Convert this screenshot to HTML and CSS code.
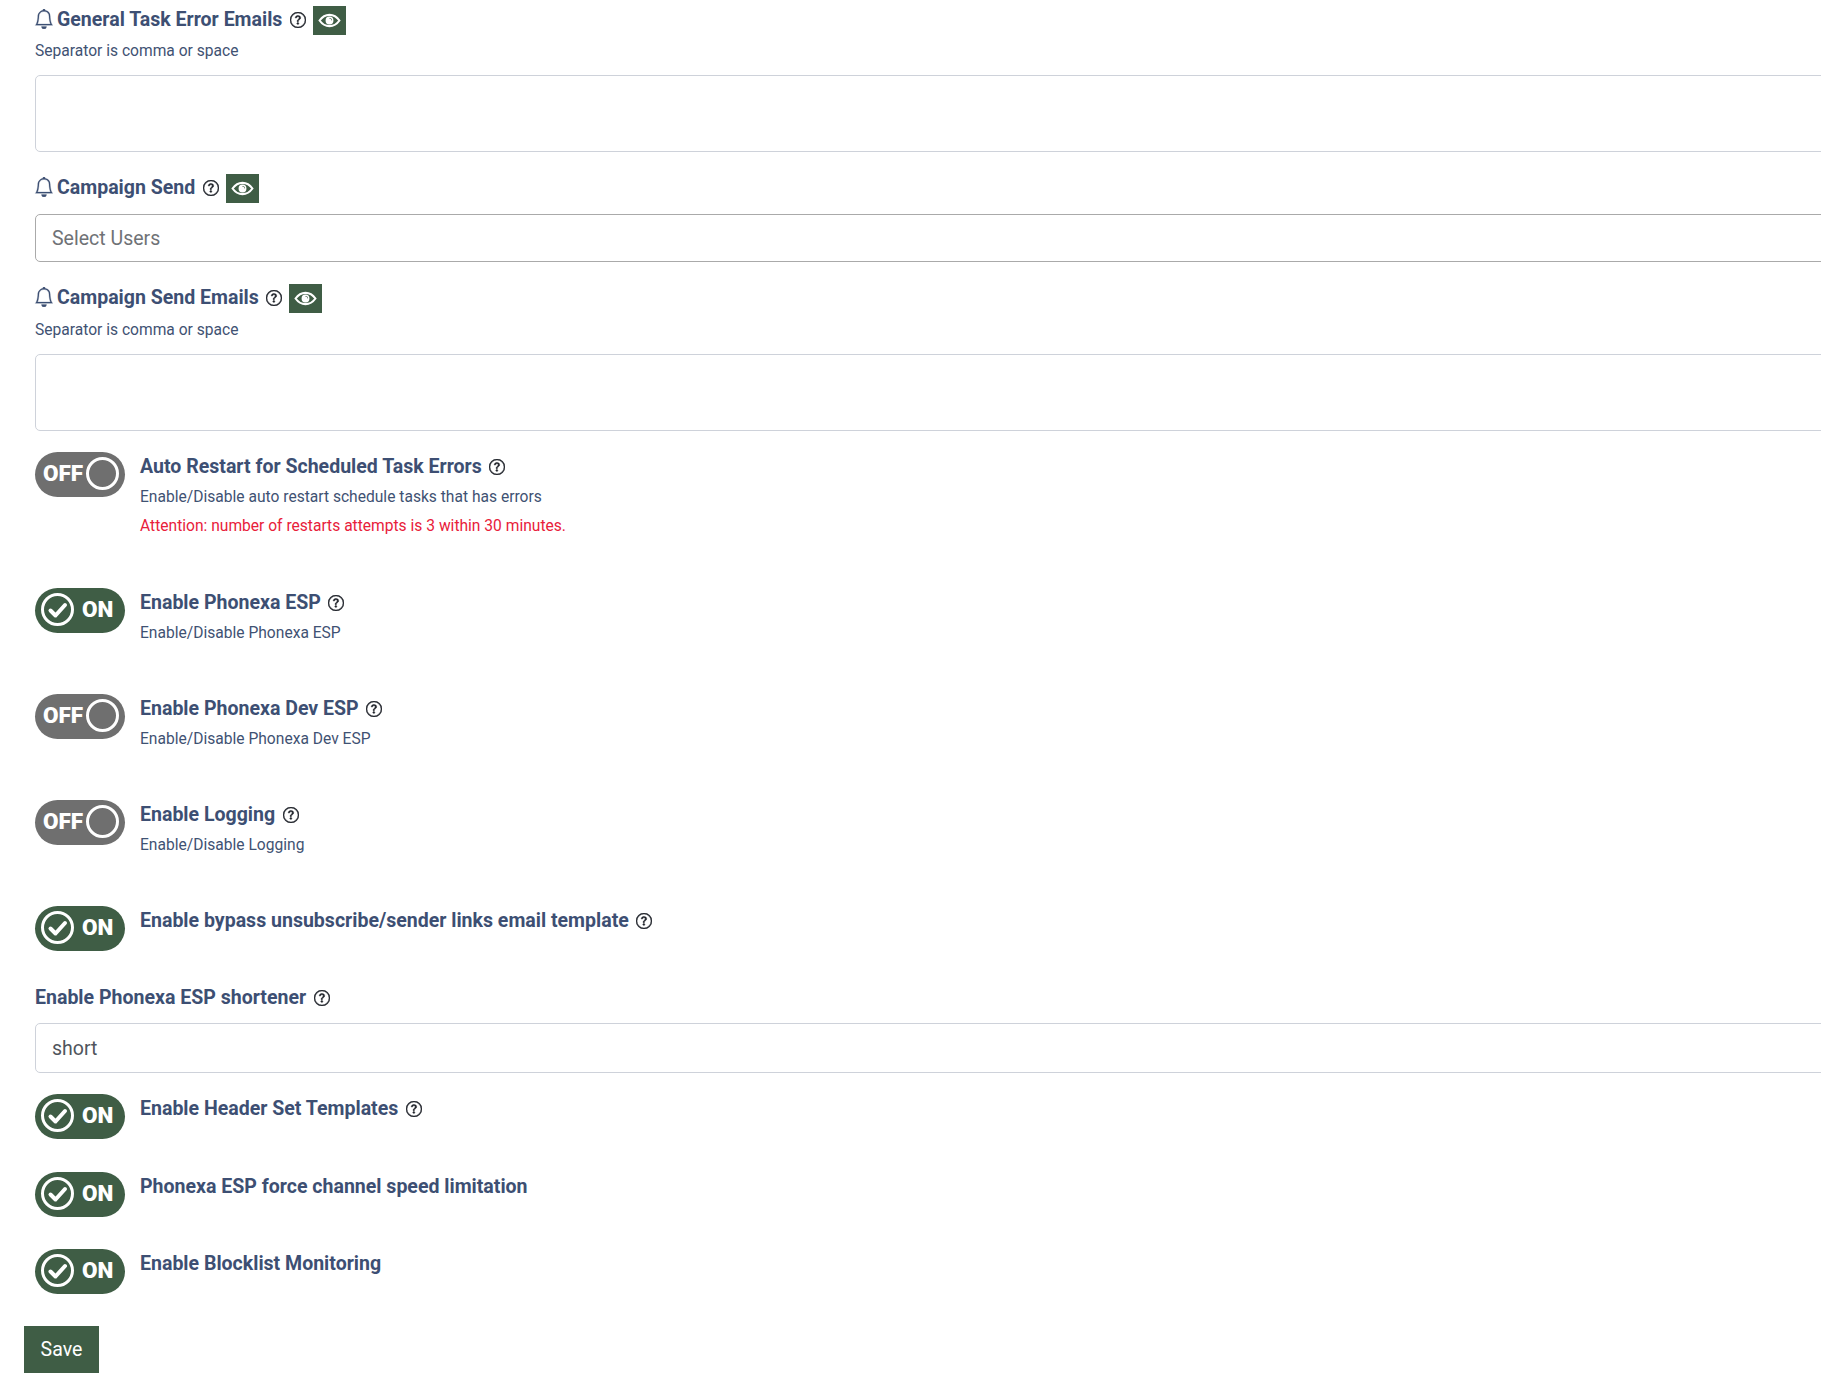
FILE: index.html
```html
<!DOCTYPE html>
<html lang="en">
<head>
<meta charset="utf-8">
<title>Settings</title>
<link rel="stylesheet" href="styles.css">
</head>
<body>
<svg class="sprite" width="0" height="0" aria-hidden="true">
  <symbol id="i-bell" viewBox="0 0 16 16"><path d="M8 16a2 2 0 0 0 2-2H6a2 2 0 0 0 2 2zM8 1.918l-.797.161A4.002 4.002 0 0 0 4 6c0 .628-.134 2.197-.459 3.742-.16.767-.376 1.566-.663 2.258h10.244c-.287-.692-.502-1.49-.663-2.258C12.134 8.197 12 6.628 12 6a4.002 4.002 0 0 0-3.203-3.92L8 1.917zM14.22 12c.223.447.481.801.78 1H1c.299-.199.557-.553.78-1C2.68 10.2 3 6.88 3 6c0-2.42 1.72-4.44 4.005-4.901a1 1 0 1 1 1.99 0A5.002 5.002 0 0 1 13 6c0 .88.32 4.2 1.22 6z"/></symbol>
  <symbol id="i-help" viewBox="0 0 16 16"><path d="M8 15A7 7 0 1 1 8 1a7 7 0 0 1 0 14zm0 1A8 8 0 1 0 8 0a8 8 0 0 0 0 16z"/><path d="M5.255 5.786a.237.237 0 0 0 .241.247h.825c.138 0 .248-.113.266-.25.09-.656.54-1.134 1.342-1.134.686 0 1.314.343 1.314 1.168 0 .635-.374.927-.965 1.371-.673.489-1.206 1.06-1.168 1.987l.003.217a.25.25 0 0 0 .25.246h.811a.25.25 0 0 0 .25-.25v-.105c0-.718.273-.927 1.01-1.486.609-.463 1.244-.977 1.244-2.056 0-1.511-1.276-2.241-2.673-2.241-1.267 0-2.655.59-2.75 2.286zm1.557 5.763c0 .533.425.927 1.01.927.609 0 1.028-.394 1.028-.927 0-.552-.42-.94-1.029-.94-.584 0-1.009.388-1.009.94z"/></symbol>
  <symbol id="i-eye" viewBox="0 0 24 16"><path fill="none" stroke="currentColor" stroke-width="2.200" d="M1.400 8C4.200 4 7.800 2 12 2s7.800 2 10.600 6c-2.800 4-6.400 6-10.600 6S4.200 12 1.400 8z"/><path fill="currentColor" fill-rule="evenodd" d="M12 3.800a4.200 4.200 0 1 0 0 8.400 4.200 4.200 0 0 0 0-8.400zm-.6 1.700a2.200 2.200 0 0 1 2.900 2.900 3.200 3.200 0 0 0-2.900-2.900z"/></symbol>
  <symbol id="i-check" viewBox="0 0 33 33"><circle cx="16.500" cy="16.500" r="15" fill="none" stroke="currentColor" stroke-width="3"/><path d="M9.500 17.500l5 5 9.500-10.500" fill="none" stroke="currentColor" stroke-width="4" stroke-linecap="round" stroke-linejoin="round"/></symbol>
</svg>
<main class="page">
  <form class="fields">
    <div class="label-row">
      <svg class="bell"><use href="#i-bell"/></svg>
      <span class="label-text">General Task Error Emails</span>
      <svg class="help"><use href="#i-help"/></svg>
      <button type="button" class="eye-btn"><svg class="eye"><use href="#i-eye"/></svg></button>
    </div>
    <p class="hint hint-top">Separator is comma or space</p>
    <textarea class="control area"></textarea>

    <div class="label-row">
      <svg class="bell"><use href="#i-bell"/></svg>
      <span class="label-text">Campaign Send</span>
      <svg class="help"><use href="#i-help"/></svg>
      <button type="button" class="eye-btn"><svg class="eye"><use href="#i-eye"/></svg></button>
    </div>
    <input class="control select" type="text" placeholder="Select Users">

    <div class="label-row">
      <svg class="bell"><use href="#i-bell"/></svg>
      <span class="label-text">Campaign Send Emails</span>
      <svg class="help"><use href="#i-help"/></svg>
      <button type="button" class="eye-btn"><svg class="eye"><use href="#i-eye"/></svg></button>
    </div>
    <p class="hint hint-top hint-lower">Separator is comma or space</p>
    <textarea class="control area area-last"></textarea>

    <div class="switch-row described">
      <span class="toggle off"><b>OFF</b><i class="knob"></i></span>
      <div class="switch-text">
        <div class="switch-title"><span class="label-text">Auto Restart for Scheduled Task Errors</span><svg class="help"><use href="#i-help"/></svg></div>
        <p class="hint">Enable/Disable auto restart schedule tasks that has errors</p>
        <p class="hint danger">Attention: number of restarts attempts is 3 within 30 minutes.</p>
      </div>
    </div>

    <div class="switch-row described">
      <span class="toggle on"><svg class="check"><use href="#i-check"/></svg><b>ON</b></span>
      <div class="switch-text">
        <div class="switch-title"><span class="label-text">Enable Phonexa ESP</span><svg class="help"><use href="#i-help"/></svg></div>
        <p class="hint">Enable/Disable Phonexa ESP</p>
      </div>
    </div>

    <div class="switch-row described">
      <span class="toggle off"><b>OFF</b><i class="knob"></i></span>
      <div class="switch-text">
        <div class="switch-title"><span class="label-text">Enable Phonexa Dev ESP</span><svg class="help"><use href="#i-help"/></svg></div>
        <p class="hint">Enable/Disable Phonexa Dev ESP</p>
      </div>
    </div>

    <div class="switch-row described">
      <span class="toggle off"><b>OFF</b><i class="knob"></i></span>
      <div class="switch-text">
        <div class="switch-title"><span class="label-text">Enable Logging</span><svg class="help"><use href="#i-help"/></svg></div>
        <p class="hint">Enable/Disable Logging</p>
      </div>
    </div>

    <div class="switch-row before-label">
      <span class="toggle on"><svg class="check"><use href="#i-check"/></svg><b>ON</b></span>
      <div class="switch-text">
        <div class="switch-title"><span class="label-text">Enable bypass unsubscribe/sender links email template</span><svg class="help"><use href="#i-help"/></svg></div>
      </div>
    </div>

    <div class="plain-label"><span class="label-text">Enable Phonexa ESP shortener</span><svg class="help"><use href="#i-help"/></svg></div>
    <input class="control value" type="text" value="short">

    <div class="switch-row">
      <span class="toggle on"><svg class="check"><use href="#i-check"/></svg><b>ON</b></span>
      <div class="switch-text">
        <div class="switch-title"><span class="label-text">Enable Header Set Templates</span><svg class="help"><use href="#i-help"/></svg></div>
      </div>
    </div>

    <div class="switch-row">
      <span class="toggle on"><svg class="check"><use href="#i-check"/></svg><b>ON</b></span>
      <div class="switch-text">
        <div class="switch-title"><span class="label-text">Phonexa ESP force channel speed limitation</span></div>
      </div>
    </div>

    <div class="switch-row last">
      <span class="toggle on"><svg class="check"><use href="#i-check"/></svg><b>ON</b></span>
      <div class="switch-text">
        <div class="switch-title"><span class="label-text">Enable Blocklist Monitoring</span></div>
      </div>
    </div>

    <button type="button" class="save">Save</button>
  </form>
</main>
</body>
</html>
```

FILE: styles.css
```css
* { box-sizing: border-box; }

html, body {
  margin: 0;
  height: 1386px;
  overflow: hidden;
  background: #fff;
}

body {
  font-family: Roboto, "Liberation Sans", sans-serif;
  color: #3b4d70;
}

.sprite { position: absolute; }

.page { padding: 6px 0 0 24px; }

.fields { padding-left: 11px; }

.label-row {
  display: flex;
  align-items: center;
  height: 29px;
}

.label-row .label-text { margin-bottom: 1px; }

.label-row .help { margin-bottom: 2px; }

.label-text {
  font-size: 19.55px;
  font-weight: 700;
  line-height: 28px;
  color: #3d4f73;
}

.bell {
  width: 20px;
  height: 20px;
  margin-left: -1px;
  margin-right: 3px;
  margin-bottom: 3px;
  fill: #3d4f73;
  stroke: #3d4f73;
  stroke-width: 0.2;
}

.help {
  width: 16px;
  height: 16px;
  margin-left: 7.5px;
  fill: #20232a;
  stroke: #20232a;
  stroke-width: 0.45;
  flex: none;
}

.eye-btn {
  width: 33px;
  height: 29px;
  margin-left: 7px;
  padding: 0;
  border: 0;
  display: flex;
  align-items: center;
  justify-content: center;
  background: #3f5d45;
  color: #fff;
}

.eye {
  width: 23px;
  height: 15px;
}

.hint {
  margin: 0;
  font-size: 15.6px;
  line-height: 29px;
  color: #3f5273;
}

.hint-top {
  margin-top: 1px;
  line-height: 30px;
  margin-bottom: 9px;
}

.hint-lower { margin-top: 2px; }

.danger {
  color: #e8203a;
  margin-bottom: 1px;
}

.control {
  display: block;
  width: 1900px;
  border: 1px solid #ced2da;
  border-radius: 5px;
  background: #fff;
  font-family: inherit;
  outline: none;
}

.area {
  height: 77px;
  margin-bottom: 22px;
  resize: none;
}

.area-last { margin-bottom: 21px; }

.select {
  height: 48px;
  margin-top: 11px;
  margin-bottom: 22px;
  padding: 0 16px;
  border-color: #aaa;
  font-size: 19.55px;
}

.select::placeholder {
  color: #6f7276;
  opacity: 1;
}

.value {
  height: 50px;
  margin-top: 11px;
  margin-bottom: 21px;
  padding: 0 16px;
  font-size: 19.55px;
  color: #50555c;
}

.switch-row {
  display: flex;
  align-items: flex-start;
  gap: 15px;
  margin-bottom: 32.5px;
}

.switch-row.described { margin-bottom: 46.5px; }

.switch-row.before-label { margin-bottom: 33px; }

.switch-row.last { margin-bottom: 31.5px; }

.toggle {
  flex: none;
  width: 90px;
  height: 45px;
  border-radius: 23px;
  display: flex;
  align-items: center;
  color: #fff;
}

.toggle b {
  font-size: 22.5px;
  font-weight: 900;
  line-height: 1;
  padding-bottom: 2px;
}

.toggle.on {
  background: #3f5d45;
  padding-left: 6px;
  gap: 8px;
}

.toggle.off {
  background: #6f6f6f;
  padding-left: 8px;
  gap: 3px;
}

.check {
  width: 33px;
  height: 33px;
  margin-bottom: 2px;
}

.knob {
  width: 33px;
  height: 33px;
  margin-bottom: 2px;
  border: 3px solid #fff;
  border-radius: 50%;
}

.switch-text {
  min-width: 0;
  padding-top: 1px;
}

.switch-title {
  display: flex;
  align-items: center;
  height: 28px;
  margin-bottom: 1.5px;
}

.plain-label {
  display: flex;
  align-items: center;
  height: 28px;
}

.save {
  display: block;
  width: 75px;
  height: 47px;
  margin-left: -11px;
  padding: 0;
  border: 0;
  background: #3f5d45;
  color: #fff;
  font-family: inherit;
  font-size: 19.55px;
}
```
